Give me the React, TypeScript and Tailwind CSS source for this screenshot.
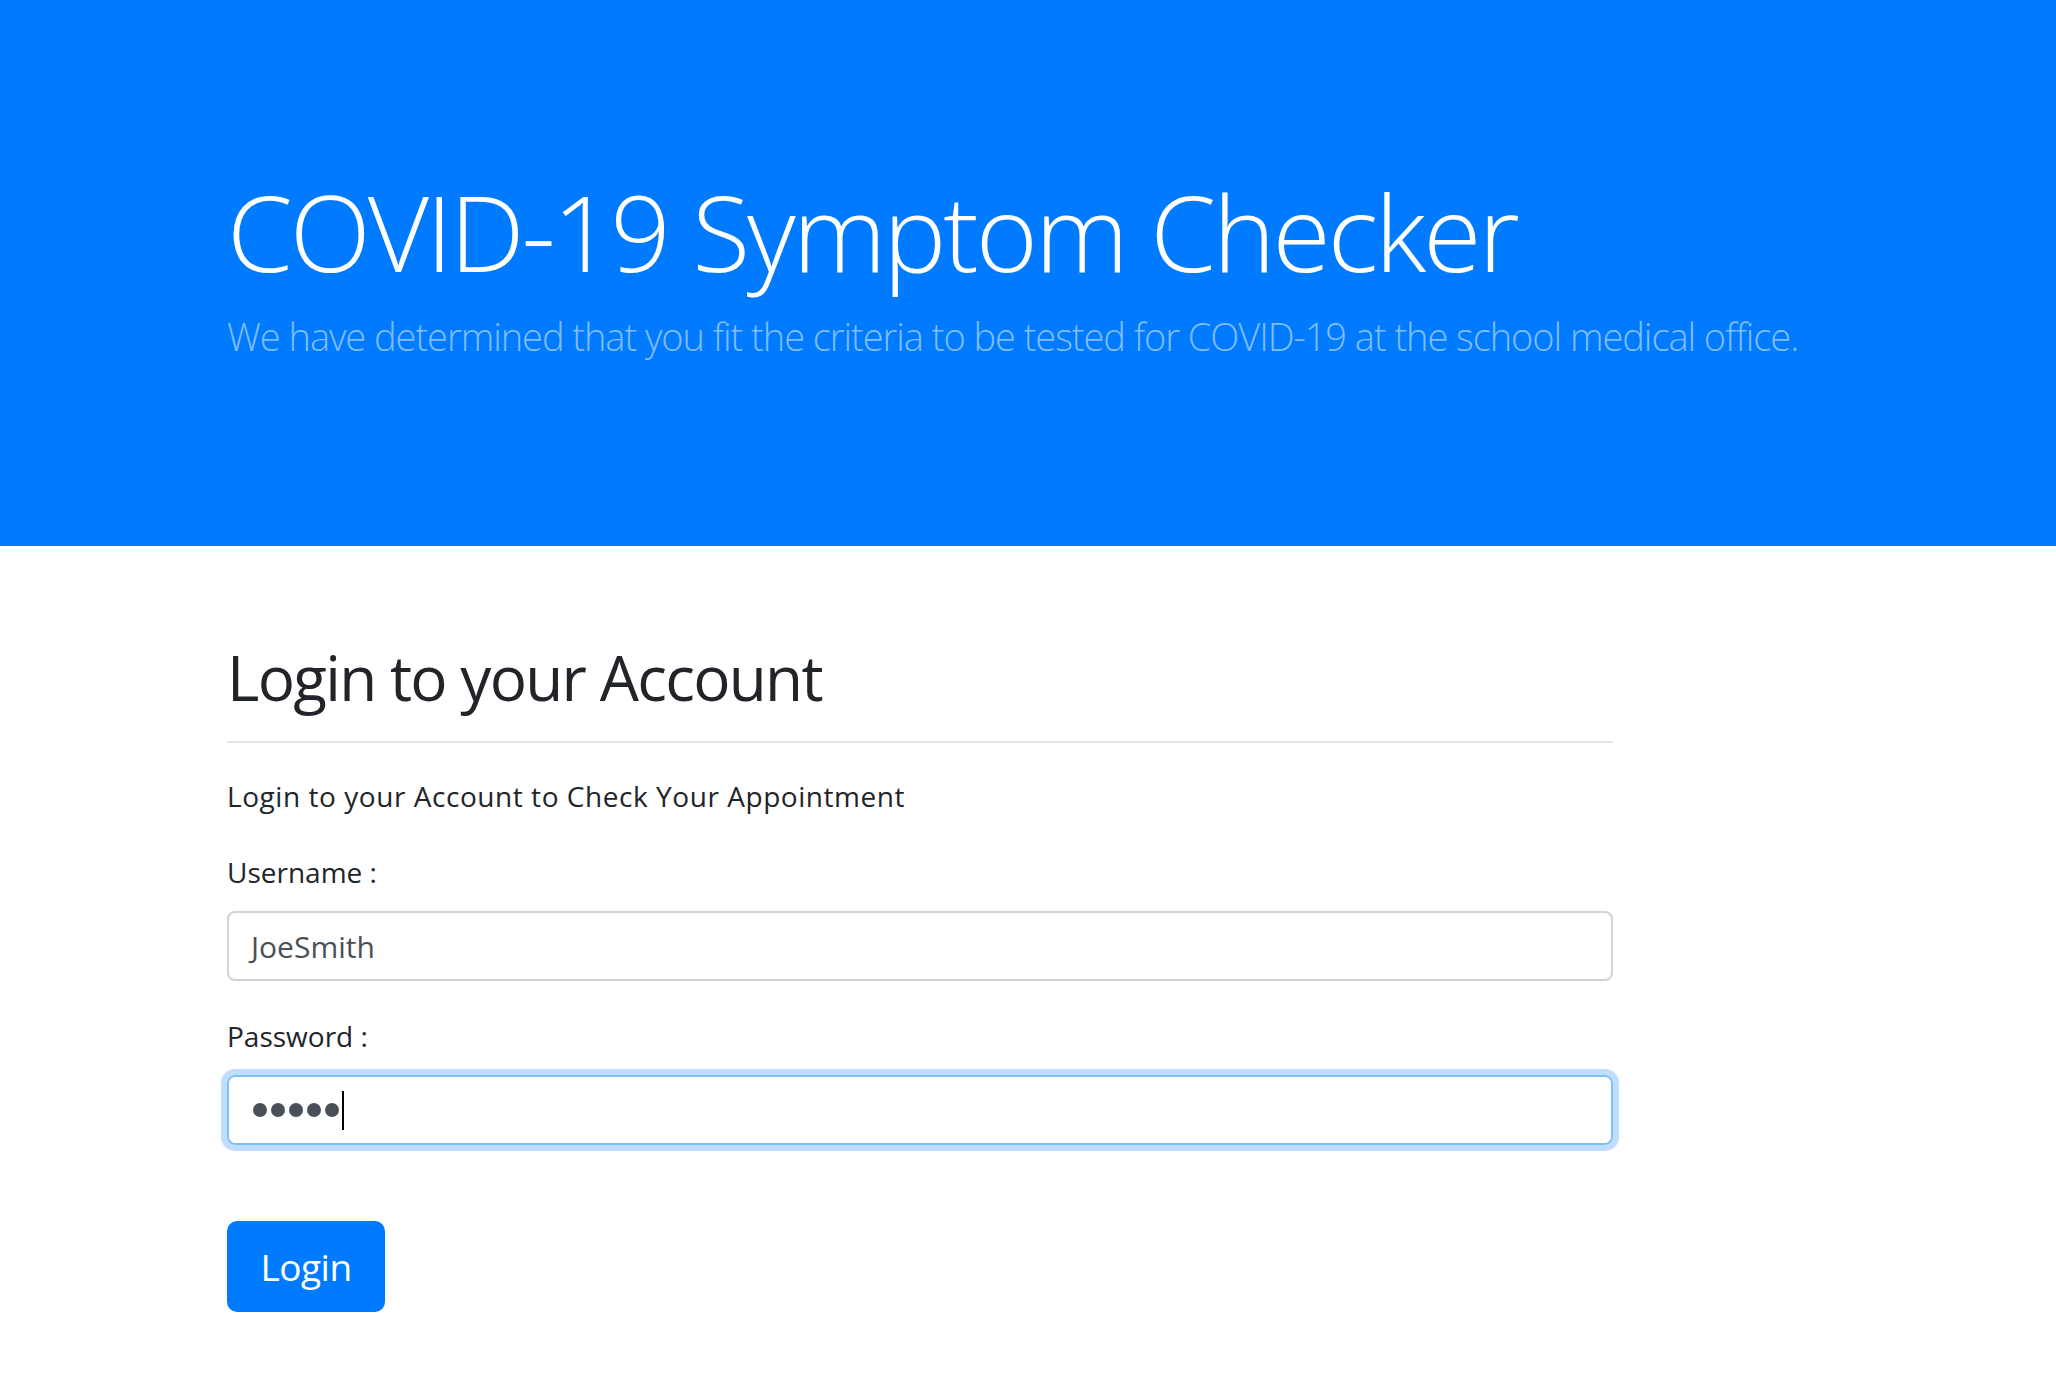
export default function App() {
  return (
    <div className="min-h-[1373px] bg-white font-['Open_Sans',sans-serif] text-[#212529]">
      <header className="h-[546px] bg-[#007bff] pl-[227px] pt-[176px]">
        <h1 className="whitespace-nowrap text-[106px] font-light leading-[110px] tracking-[-3px] text-white">
          COVID-19 Symptom Checker
        </h1>
        <p className="mt-[30px] whitespace-nowrap text-[38px] font-light leading-[40px] tracking-[-1.05px] text-[#80bdff]">
          We have determined that you fit the criteria to be tested for COVID-19 at the school medical office.
        </p>
      </header>
      <main className="ml-[227px] w-[1386px] pt-[99px]">
        <h2 className="text-[62px] leading-[64px] tracking-[-1.7px]">Login to your Account</h2>
        <hr className="mt-[32px] border-t-2 border-[#e5e5e5]" />
        <p className="mt-[39px] text-[28px] leading-[28px] tracking-[0.55px]">
          Login to your Account to Check Your Appointment
        </p>
        <label className="mt-[48px] block text-[28px] leading-[28px]">Username :</label>
        <div className="mt-[25px] flex h-[70px] items-center rounded-[8px] border-2 border-[#ced4da] px-[22px] text-[30px] text-[#495057]">
          JoeSmith
        </div>
        <label className="mt-[41px] block text-[28px] leading-[28px]">Password :</label>
        <div className="mt-[25px] flex h-[70px] items-center rounded-[8px] border-2 border-[#80bdff] px-[24px] shadow-[0_0_0_6px_rgba(0,123,255,0.25)]">
          <div className="flex items-center gap-[4px]">
            <span className="h-[14px] w-[14px] rounded-full bg-[#495057]" />
            <span className="h-[14px] w-[14px] rounded-full bg-[#495057]" />
            <span className="h-[14px] w-[14px] rounded-full bg-[#495057]" />
            <span className="h-[14px] w-[14px] rounded-full bg-[#495057]" />
            <span className="h-[14px] w-[14px] rounded-full bg-[#495057]" />
          </div>
          <span className="ml-[3px] h-[39px] w-[2px] bg-black" />
        </div>
        <button className="mt-[76px] flex h-[91px] w-[158px] items-center justify-center rounded-[10px] bg-[#007bff] text-[37px] tracking-[-0.5px] text-white">
          Login
        </button>
      </main>
    </div>
  );
}
